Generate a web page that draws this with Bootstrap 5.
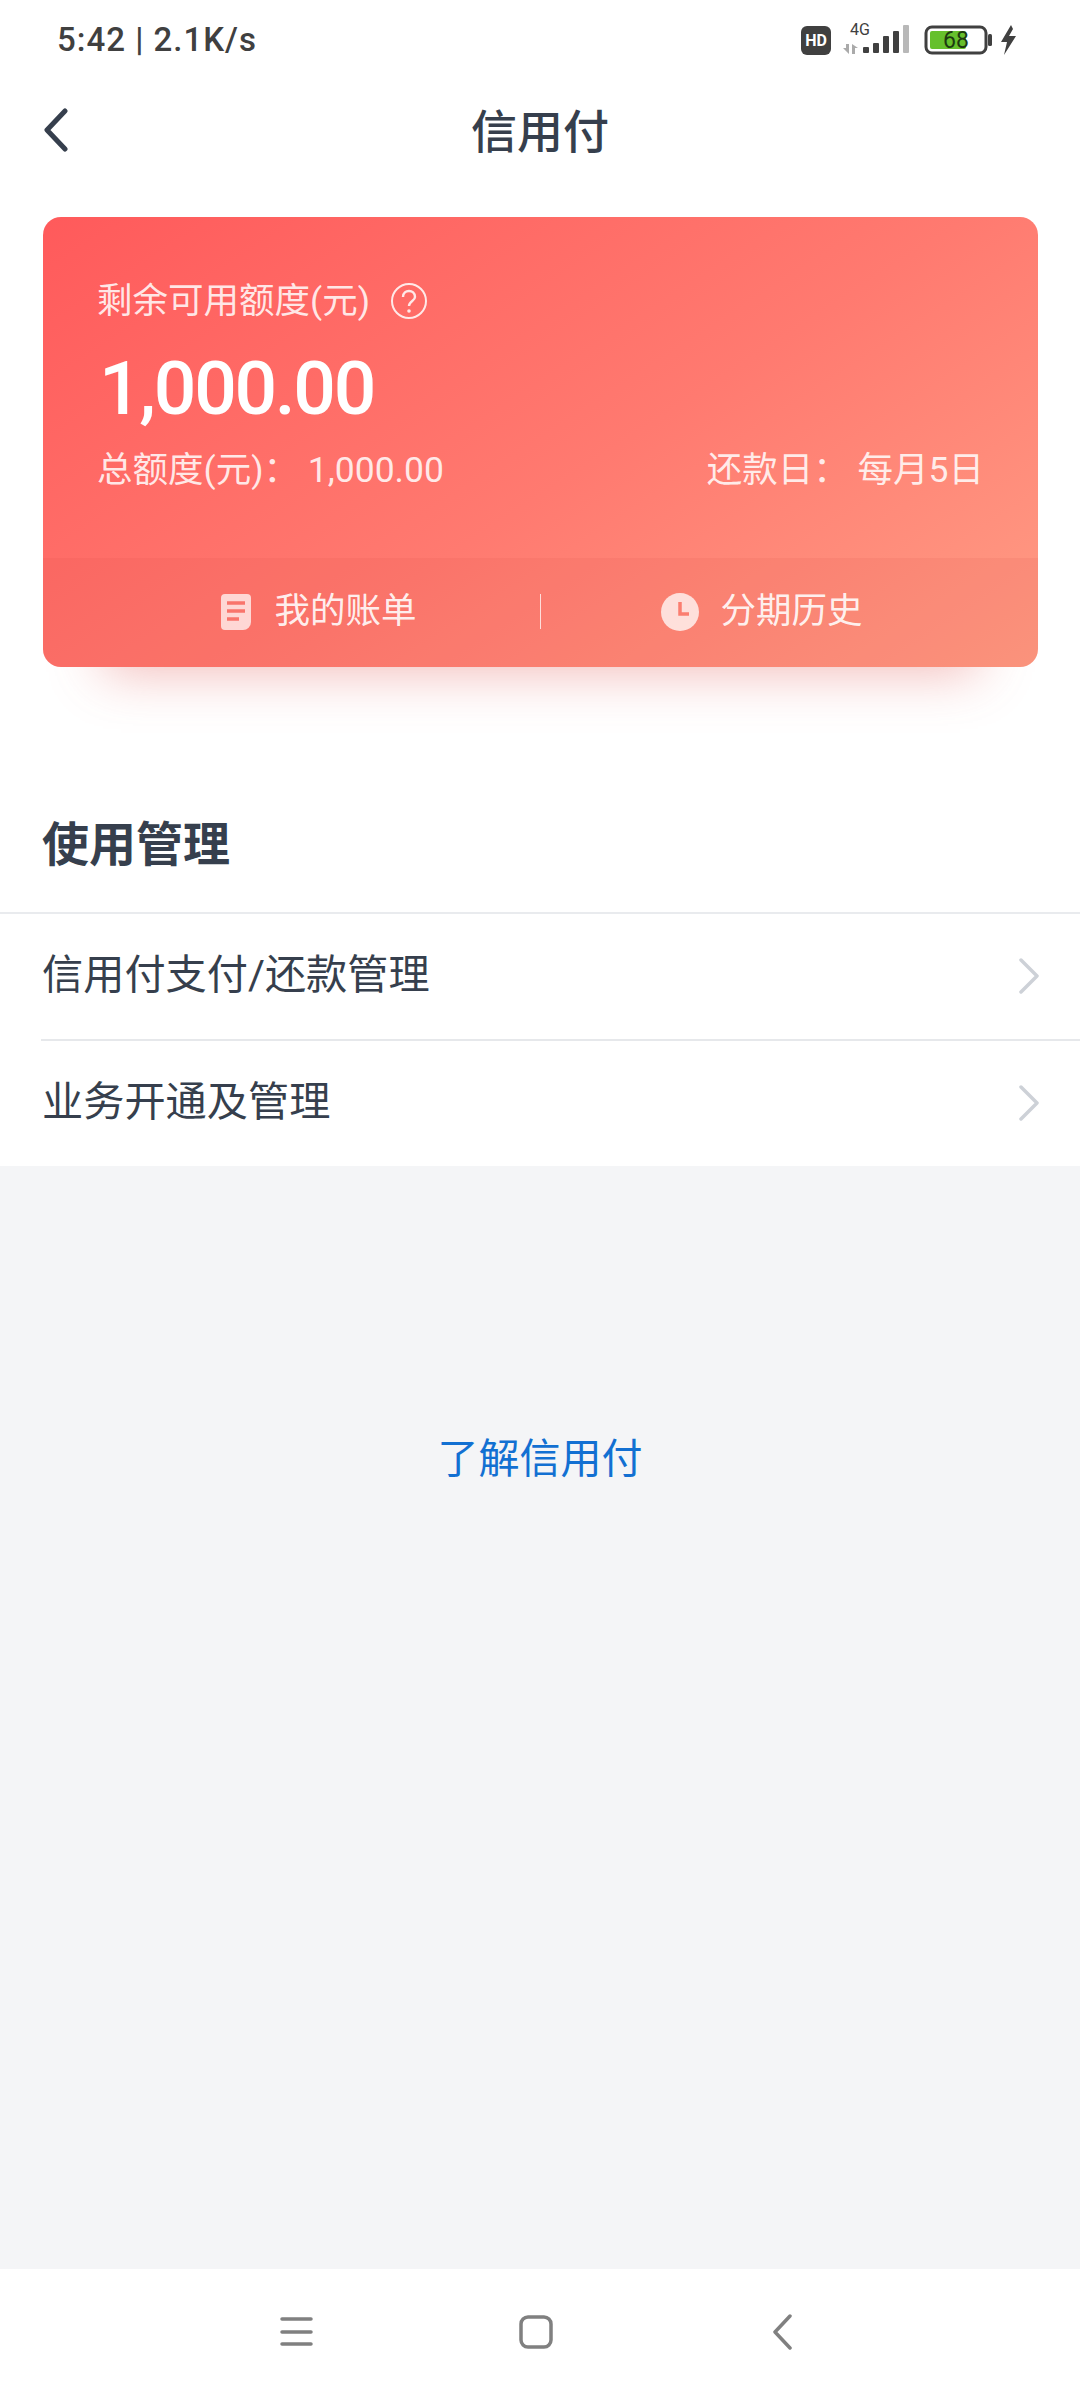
<!DOCTYPE html>
<html lang="zh-CN">
<head>
  <meta charset="UTF-8">
  <title>信用付</title>
  <link rel="stylesheet" href="https://cdn.jsdelivr.net/npm/bootstrap@5.3.0/dist/css/bootstrap.min.css">
  <style>
    body { width: 1080px; height: 2400px; overflow: hidden; font-family: Roboto, "Noto Sans CJK SC", sans-serif; color: #363f4d; background: #fff; }
    .page-wrap { height: 2400px; }
    .status-row { height: 80px; padding: 0 62px 0 57px; }
    .status-time { font-size: 33px; font-weight: 500; line-height: 80px; letter-spacing: 1px; color: #404040; }
    .hd-tag { width: 30px; height: 29px; background: #404040; color: #fff; border-radius: 6px; font-size: 16px; font-weight: 700; line-height: 29px; text-align: center; }
    .sig-icon { margin: 0 14px 0 12px; }
    .bolt-icon { margin-left: 6px; }
    .title-row { height: 100px; }
    .title-text { font-size: 46px; font-weight: 500; line-height: 104px; }
    .back-btn { left: 43px; top: 28px; }
    .credit-box { margin: 37px 42px 0 43px; height: 450px; border-radius: 18px; color: #fff; background: linear-gradient(147deg, #ff5a5b 0%, #ff7a70 55%, #ff9c84 100%); box-shadow: 0 65px 50px -60px rgba(225, 90, 85, .42); }
    .credit-top { height: 341px; padding: 0 54px 0 54px; }
    .label-line { padding-top: 61px; height: 127px; line-height: 46px; font-size: 35.5px; color: rgba(255,255,255,.85); }
    .help-icon { margin: 4px 0 0 20px; }
    .amount-line { font-size: 75px; font-weight: 500; line-height: 88px; height: 88px; padding-left: 2px; letter-spacing: -2.3px; }
    .sum-line { margin-top: 15px; font-size: 35.5px; line-height: 46px; color: rgba(255,255,255,.85); }
    .credit-strip { height: 109px; padding-bottom: 2px; background: rgba(205, 70, 60, .1); border-radius: 0 0 18px 18px; font-size: 35.5px; color: rgba(255,255,255,.9); }
    .strip-cell { width: 442px; }
    .bill-icon { margin-right: 23px; }
    .clock-icon { margin-right: 21px; }
    .strip-sep { width: 1px; height: 35px; background: rgba(255,255,255,.75); }
    .section-head { padding: 143px 0 0 42px; height: 247px; font-size: 47px; font-weight: 700; line-height: 70px; border-bottom: 2px solid #e9ebee; }
    .menu-line { height: 125px; padding: 0 40px 2px 42px; font-size: 41.2px; }
    .menu-line + .menu-line { height: 127px; margin-left: 41px; padding-left: 1px; border-top: 2px solid #e6e8eb; }
    .gray-area { flex: 1; background: #f4f5f7; }
    .learn-link { margin-top: 264px; font-size: 41px; line-height: 58px; color: #1270d2; }
    .sys-bar { height: 131px; padding: 0 0 5px 10px; }
  </style>
</head>
<body>
<div class="page-wrap d-flex flex-column">

  <!-- status bar -->
  <div class="status-row d-flex justify-content-between align-items-center">
    <div class="status-time">5:42 | 2.1K/s</div>
    <div class="d-flex align-items-center">
      <div class="hd-tag">HD</div>
      <svg class="sig-icon" width="67" height="40" viewBox="0 -4 67 40">
        <text x="7" y="11" font-family="Roboto" font-size="16" fill="#404040">4G</text>
        <path d="M3 20h3v10L0 24h3zM9 20v10h3v-6h3z" fill="#aaa"/>
        <g fill="#404040">
          <rect x="20" y="23" width="6" height="6" rx="1"/>
          <rect x="30" y="19" width="6" height="10" rx="1"/>
          <rect x="40" y="12" width="6" height="17" rx="1"/>
          <rect x="50" y="7" width="6" height="22" rx="1"/>
        </g>
        <rect x="60" y="1" width="6" height="28" rx="1" fill="#b8b8b8"/>
      </svg>
      <svg width="68" height="30" viewBox="0 0 68 30">
        <rect x="2" y="2" width="60" height="26" rx="6" fill="none" stroke="#404040" stroke-width="3"/>
        <rect x="6" y="6" width="36" height="18" rx="2" fill="#66c02c"/>
        <text x="32" y="23" text-anchor="middle" font-family="Roboto" font-size="23" fill="#1d3a10">68</text>
        <rect x="64" y="9" width="4" height="12" rx="1.5" fill="#404040"/>
      </svg>
      <svg class="bolt-icon" width="20" height="32" viewBox="0 0 20 32">
        <path d="M13 1 3 18h6L6 31 18 12h-7l4-7z" fill="#404040"/>
      </svg>
    </div>
  </div>

  <!-- title -->
  <div class="title-row position-relative text-center">
    <svg class="back-btn position-absolute" width="26" height="44" viewBox="0 0 26 44">
      <path d="M22 3 4 22l18 19" fill="none" stroke="#363f4d" stroke-width="5" stroke-linecap="round" stroke-linejoin="round"/>
    </svg>
    <div class="title-text">信用付</div>
  </div>

  <!-- credit card -->
  <div class="credit-box">
    <div class="credit-top">
      <div class="label-line d-flex align-items-start">
        <span>剩余可用额度(元)</span>
        <svg class="help-icon" width="38" height="38" viewBox="0 0 38 38">
          <circle cx="19" cy="19" r="17" fill="none" stroke="rgba(255,255,255,.85)" stroke-width="2"/>
          <path d="M13 15c0-4 3-6 6-6s6 2 6 6c0 4-6 4-6 9" fill="none" stroke="rgba(255,255,255,.85)" stroke-width="2.4"/>
          <circle cx="19" cy="29" r="1.8" fill="rgba(255,255,255,.85)"/>
        </svg>
      </div>
      <div class="amount-line">1,000.00</div>
      <div class="sum-line d-flex justify-content-between">
        <span>总额度(元)： 1,000.00</span>
        <span>还款日： 每月5日</span>
      </div>
    </div>
    <div class="credit-strip d-flex justify-content-center align-items-center">
      <div class="strip-cell d-flex justify-content-center align-items-center">
        <svg class="bill-icon" width="30" height="36" viewBox="0 0 30 36">
          <path d="M4 0h22a4 4 0 0 1 4 4v24a8 8 0 0 1-8 8H4a4 4 0 0 1-4-4V4a4 4 0 0 1 4-4z" fill="rgba(255,255,255,.72)"/>
          <path d="M6 9h18M6 17h18M6 25h12" stroke="#f9746b" stroke-width="3.5" fill="none"/>
        </svg>
        <span>我的账单</span>
      </div>
      <div class="strip-sep"></div>
      <div class="strip-cell d-flex justify-content-center align-items-center">
        <svg class="clock-icon" width="38" height="38" viewBox="0 0 38 38">
          <circle cx="19" cy="19" r="19" fill="rgba(255,255,255,.75)"/>
          <path d="M19 9v12h9" fill="none" stroke="#fb7e70" stroke-width="3.5"/>
        </svg>
        <span>分期历史</span>
      </div>
    </div>
  </div>

  <!-- list -->
  <div class="section-head">使用管理</div>
  <div class="menu-line d-flex justify-content-between align-items-center">
    <span>信用付支付/还款管理</span>
    <svg width="22" height="36" viewBox="0 0 22 36"><path d="M3 2l16 16L3 34" fill="none" stroke="#cdd1d7" stroke-width="3.5" stroke-linecap="round" stroke-linejoin="round"/></svg>
  </div>
  <div class="menu-line d-flex justify-content-between align-items-center">
    <span>业务开通及管理</span>
    <svg width="22" height="36" viewBox="0 0 22 36"><path d="M3 2l16 16L3 34" fill="none" stroke="#cdd1d7" stroke-width="3.5" stroke-linecap="round" stroke-linejoin="round"/></svg>
  </div>

  <!-- learn more -->
  <div class="gray-area text-center">
    <div class="learn-link">了解信用付</div>
  </div>

  <!-- android nav bar -->
  <div class="sys-bar d-flex justify-content-center align-items-center">
    <svg width="530" height="36" viewBox="0 0 530 36">
      <path d="M2 5h29M2 18h29M2 30h29" stroke="#808080" stroke-width="3.5" stroke-linecap="round"/>
      <rect x="241" y="3" width="30" height="30" rx="7" fill="none" stroke="#808080" stroke-width="3.5"/>
      <path d="M510 2 495 18l15 16" fill="none" stroke="#808080" stroke-width="3.5" stroke-linecap="round" stroke-linejoin="round"/>
    </svg>
  </div>
</div>
<script src="https://cdn.jsdelivr.net/npm/bootstrap@5.3.0/dist/js/bootstrap.bundle.min.js"></script>
</body>
</html>
